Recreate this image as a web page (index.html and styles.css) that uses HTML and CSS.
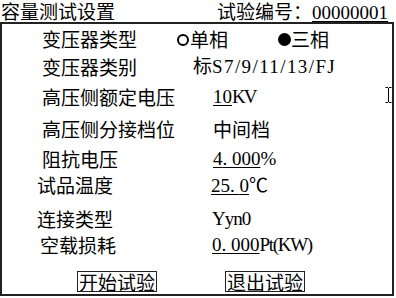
FILE: index.html
```html
<!DOCTYPE html>
<html lang="zh-CN">
<head>
<meta charset="utf-8">
<title>容量测试设置</title>
<link rel="stylesheet" href="styles.css">
</head>
<body>
<div class="screen">
  <header class="header">
    <div class="title">容量测试设置</div>
    <div class="serial">试验编号：<span class="num ul">00000001</span></div>
  </header>
  <main class="panel">
    <div class="form">
      <div class="row">
        <span class="label">变压器类型</span>
        <span class="value radios">
          <span class="opt"><span class="radio"></span>单相</span>
          <span class="opt opt-2"><span class="radio on"></span>三相</span>
        </span>
      </div>
      <div class="row">
        <span class="label">变压器类别</span>
        <span class="value num">标<span class="spaced">S7/9/11/13/FJ</span></span>
      </div>
      <div class="row">
        <span class="label">高压侧额定电压</span>
        <span class="value num"><span class="ul">10</span><span class="tight">KV</span></span>
      </div>
      <div class="row">
        <span class="label">高压侧分接档位</span>
        <span class="value">中间档</span>
      </div>
      <div class="row">
        <span class="label">阻抗电压</span>
        <span class="value num"><span class="ul">4<span class="dot">.</span>000</span>%</span>
      </div>
      <div class="row">
        <span class="label">试品温度</span>
        <span class="value num"><span class="ul">25<span class="dot">.</span>0</span><span class="cjk">℃</span></span>
      </div>
      <div class="row">
        <span class="label">连接类型</span>
        <span class="value num"><span class="yyn">Yyn0</span></span>
      </div>
      <div class="row">
        <span class="label">空载损耗</span>
        <span class="value num"><span class="ul">0<span class="dot">.</span>000</span><span class="unit">Pt(KW)</span></span>
      </div>
    </div>
    <div class="actions">
      <span class="btn">开始试验</span>
      <span class="btn">退出试验</span>
    </div>
  </main>
  <svg class="cursor" width="9" height="18" viewBox="0 0 9 18" aria-hidden="true">
    <path d="M1.5 1.5h2.5M5 1.5h2.5M4.5 2v14M1.5 16.5h2.5M5 16.5h2.5" stroke="#fff" stroke-width="3" fill="none"/>
    <path d="M1.5 1.5h2.5M5 1.5h2.5M4.5 2v14M1.5 16.5h2.5M5 16.5h2.5" stroke="#000" stroke-width="1" fill="none"/>
  </svg>
</div>
</body>
</html>
```
FILE: styles.css
```css
* { box-sizing: border-box; }

html, body {
  margin: 0;
  padding: 0;
  background: #fff;
}

body {
  font-family: "Noto Sans CJK SC", "Noto Sans", sans-serif;
  font-size: 19px;
  color: #000;
}

.screen {
  position: relative;
  width: 396px;
  height: 298px;
}

.header {
  width: 394px;
  height: 22px;
  display: flex;
  justify-content: space-between;
  padding: 0 6px 0 1px;
  white-space: nowrap;
}

.title,
.serial {
  height: 22px;
  line-height: 22px;
}

.num {
  font-family: "Liberation Serif", "Noto Sans CJK SC", serif;
}

.cjk {
  font-family: "Noto Sans CJK SC", sans-serif;
}

.ul {
  text-decoration: underline;
  text-decoration-thickness: 1px;
  text-underline-offset: 2px;
}

.panel {
  width: 394px;
  height: 274px;
  border: 2px solid #222;
  display: flex;
  flex-direction: column;
}

.form {
  display: flex;
  flex-direction: column;
  padding-left: 40px;
}

.row {
  display: flex;
  align-items: center;
  height: 24px;
  line-height: 24px;
  white-space: nowrap;
}

.row:nth-child(1) { margin-top: 3px; }
.row:nth-child(2) { margin-top: 4px; }
.row:nth-child(3) { margin-top: 5.5px; }
.row:nth-child(4) { margin-top: 8.5px; }
.row:nth-child(5) { margin-top: 6px; }
.row:nth-child(6) { margin-top: 2px; }
.row:nth-child(7) { margin-top: 10px; }
.row:nth-child(8) { margin-top: 1.5px; }

.label {
  width: 171px;
  flex: none;
}

.row:nth-child(1) .value { margin-left: -36px; }
.row:nth-child(2) .value { margin-left: -20px; }
.row:nth-child(6) .label,
.row:nth-child(7) .label { margin-left: -5px; }
.row:nth-child(6) .value { margin-left: 3px; }
.row:nth-child(7) .value { margin-left: 4px; }
.row:nth-child(8) .label { margin-left: -2px; }
.row:nth-child(8) .value { margin-left: 1px; }

.radios {
  display: flex;
  align-items: center;
}

.opt {
  display: inline-flex;
  align-items: center;
}

.opt-2 { margin-left: 50px; }

.radio {
  width: 12px;
  height: 12px;
  border: 2px solid #000;
  border-radius: 50%;
  margin-right: 1px;
  margin-top: 2px;
}

.radio.on {
  width: 13px;
  height: 13px;
  background: #000;
  margin-right: 0;
  margin-top: 1px;
}

.spaced { letter-spacing: 1.4px; }
.tight { letter-spacing: -2px; }
.yyn { letter-spacing: -1px; }
.unit { letter-spacing: -1.3px; }
.dot { letter-spacing: 4.75px; }

.actions {
  display: flex;
  gap: 68px;
  padding-left: 75px;
  margin-top: 14.5px;
}

.btn {
  display: block;
  border: 1px solid #222;
  height: 21px;
  line-height: 19px;
  padding: 0 1px;
  white-space: nowrap;
}

.cursor {
  position: absolute;
  left: 384px;
  top: 86px;
}
```
